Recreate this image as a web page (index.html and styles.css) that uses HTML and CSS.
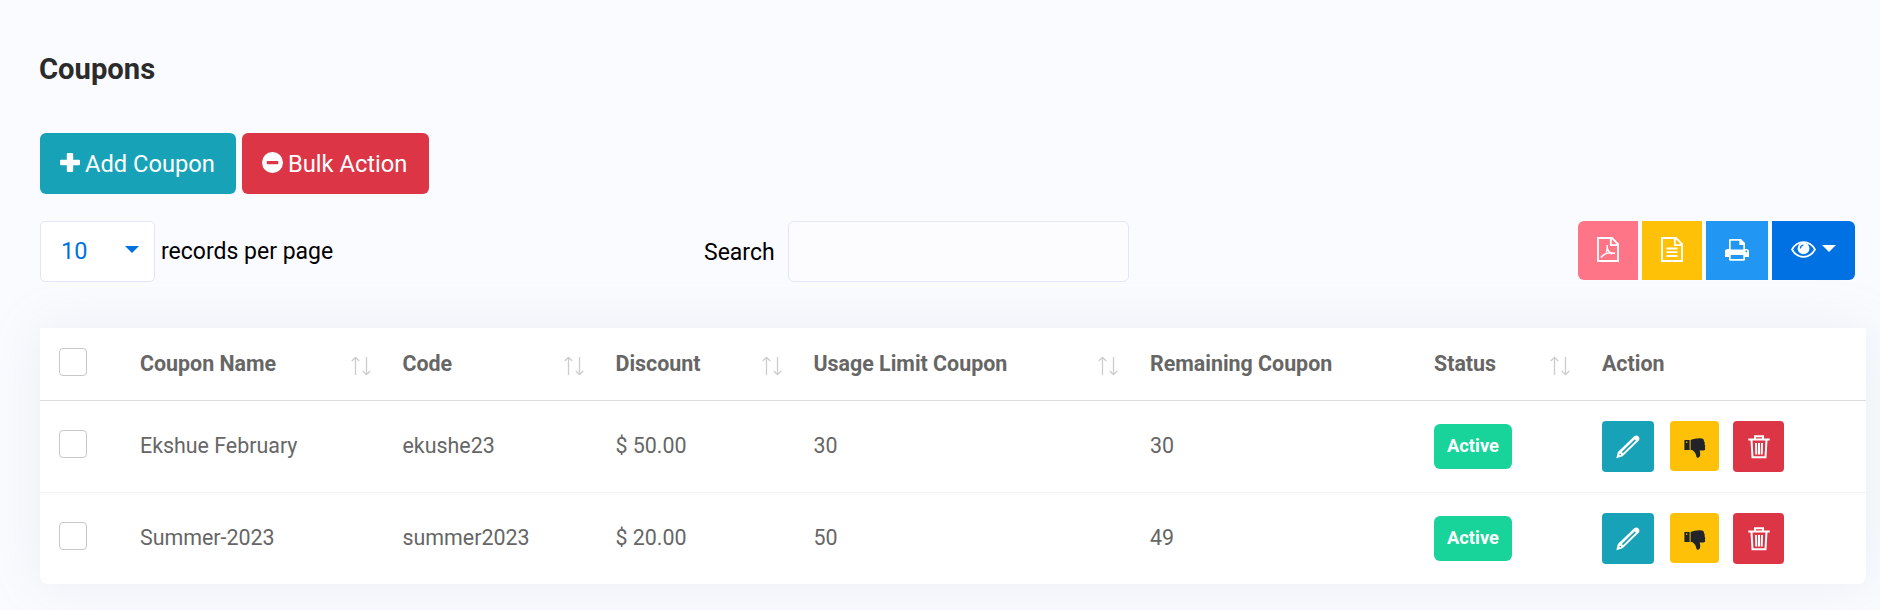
FILE: index.html
```
<!DOCTYPE html>
<html lang="en">
<head>
<meta charset="utf-8">
<title>Coupons</title>
<link rel="stylesheet" href="styles.css">
</head>
<body>
<svg class="defs" width="0" height="0" aria-hidden="true">
  <symbol id="i-sort" viewBox="0 0 20 20"><path d="M4.500 19V1.500M.8 5l3.700-3.600L8.200 5M15.500 1v17.500M11.800 15l3.700 3.600 3.700-3.600" fill="none" stroke="currentColor" stroke-width="1.300"/></symbol>
  <symbol id="i-pencil" viewBox="0 0 24 24"><path d="M.3 23.300l1.600-6.200L18.200 1.300c3-2.400 7 1.500 4.400 4.400L6.600 21.200z" fill="currentColor"/><path d="M5.800 17L18.800 4.300l1.100 1.100L7 18.200z" class="cut-teal"/><circle cx="4.200" cy="19.600" r=".8" class="cut-teal"/></symbol>
  <symbol id="i-thumb" viewBox="0 0 22 20"><path fill="currentColor" fill-rule="evenodd" d="M.4 2H5.600V12H.4zM2 3.400v1.400h1.400V3.400zM6.600 2C10 1 12 .2 16 .3c3.200 0 4 1 4 3 .9.900.9 2 .5 3 .9 1 .9 2.200.4 3.300.9 1.900-.2 3-1.600 3h-3.700c.4 1.500.7 2.500.6 4-.1 2-.8 3.200-2.400 3.200-1.500 0-1.400-2-2-3.600C11 13.900 9 12.600 8 12H6.600z"/></symbol>
  <symbol id="i-trash" viewBox="0 0 22 24"><path d="M.3 4.500h21.400M7 4V1.300h8V4M3.500 5l1 17.300h13l1-17.300M8 8l.3 11.500M11 8v11.500M14 8l-.3 11.500" fill="none" stroke="currentColor" stroke-width="2"/></symbol>
</svg>
<main class="page">
  <h1 class="title">Coupons</h1>
  <div class="buttons">
    <button class="btn teal"><svg width="20" height="20" viewBox="0 0 20 20"><path d="M8 0h4a1.200 1.200 0 0 1 1.200 1.200v5.600h5.600A1.200 1.200 0 0 1 20 8v3a1.200 1.200 0 0 1-1.200 1.200h-5.600v5.600A1.200 1.200 0 0 1 12 19H8a1.200 1.200 0 0 1-1.200-1.200v-5.600H1.200A1.200 1.200 0 0 1 0 11V8a1.200 1.200 0 0 1 1.200-1.200h5.600V1.200A1.200 1.200 0 0 1 8 0z" fill="currentColor"/></svg><span>Add Coupon</span></button>
    <button class="btn red"><svg width="21" height="21" viewBox="0 0 21 21"><path fill="currentColor" fill-rule="evenodd" d="M10.500 0a10.500 10.500 0 1 1 0 21 10.500 10.500 0 0 1 0-21zM5.500 9a.8.8 0 0 0-.8.800v1.600a.8.8 0 0 0 .8.800h10a.8.8 0 0 0 .8-.8V9.800a.8.8 0 0 0-.8-.8z"/></svg><span>Bulk Action</span></button>
  </div>
  <div class="toolbar">
    <div class="length">
      <div class="select"><span>10</span><i class="caret"></i></div>
      <span class="label">records per page</span>
    </div>
    <label class="search"><span class="label">Search</span><input type="text" class="field"></label>
    <div class="export">
      <button class="tool pdf"><svg width="22" height="25" viewBox="0 0 22 25"><path d="M1 1h14l6 6v17H1zM13.800 1v7.200H21" fill="none" stroke="currentColor" stroke-width="1.800"/><path d="M4 20.500c1.500-2.500 3.800-3.600 6.500-4.400 2.600-.7 5-.6 7.500.4M10.200 8c.2 3 .1 5-1 7.500M10 11c1 2.800 2.500 4.800 5 6.400" fill="none" stroke="currentColor" stroke-width="1.500"/></svg></button>
      <button class="tool csv"><svg width="22" height="25" viewBox="0 0 22 25"><path d="M1 1h14l6 6v17H1zM13.800 1v7.200H21M5.500 11.500h11M5.500 15.200h11M5.500 19h11" fill="none" stroke="currentColor" stroke-width="1.800"/></svg></button>
      <button class="tool print"><svg width="24" height="22" viewBox="0 0 24 22"><path fill="currentColor" fill-rule="evenodd" d="M5 0h11l4 4v6h1.500A2.500 2.500 0 0 1 24 12.500V18h-4v2.500a1.300 1.300 0 0 1-1.300 1.300H5.300A1.300 1.300 0 0 1 4 20.500V18H0v-5.500A2.500 2.500 0 0 1 2.500 10H4V1a1 1 0 0 1 1-1zM5.700 1.700V10.500H18.300V6H14.300V1.700zM5.700 16V20H18.300V16zM21.300 11.500a.9.9 0 1 0 .01 0z"/></svg></button>
      <button class="tool view"><svg width="25" height="17" viewBox="0 0 25 17"><path d="M1 8.500C6.500-1.300 18.500-1.300 24 8.500 18.500 18.300 6.500 18.300 1 8.500z" fill="none" stroke="currentColor" stroke-width="1.700"/><circle cx="12.500" cy="7.400" r="5.900" fill="currentColor"/><path d="M9.400 7.600c0-2 1.100-3.300 3-3.500" class="glint"/></svg><i class="caret"></i></button>
    </div>
  </div>
  <table class="table">
    <colgroup><col class="c1"><col class="c2"><col class="c3"><col class="c4"><col class="c5"><col class="c6"><col class="c7"><col class="c8"></colgroup>
    <thead>
      <tr>
        <th><span class="check"></span></th>
        <th><div class="head">Coupon Name<svg class="sort"><use href="#i-sort"/></svg></div></th>
        <th><div class="head">Code<svg class="sort"><use href="#i-sort"/></svg></div></th>
        <th><div class="head">Discount<svg class="sort"><use href="#i-sort"/></svg></div></th>
        <th><div class="head">Usage Limit Coupon<svg class="sort"><use href="#i-sort"/></svg></div></th>
        <th><div class="head plain">Remaining Coupon</div></th>
        <th><div class="head">Status<svg class="sort"><use href="#i-sort"/></svg></div></th>
        <th><div class="head plain">Action</div></th>
      </tr>
    </thead>
    <tbody>
      <tr>
        <td><span class="check"></span></td><td>Ekshue February</td><td>ekushe23</td><td>$ 50.00</td><td>30</td><td>30</td>
        <td><span class="badge">Active</span></td>
        <td><div class="actions"><button class="act edit"><svg width="24" height="24"><use href="#i-pencil"/></svg></button><button class="act down"><svg width="22" height="20"><use href="#i-thumb"/></svg></button><button class="act del"><svg width="22" height="24"><use href="#i-trash"/></svg></button></div></td>
      </tr>
      <tr>
        <td><span class="check"></span></td><td>Summer-2023</td><td>summer2023</td><td>$ 20.00</td><td>50</td><td>49</td>
        <td><span class="badge">Active</span></td>
        <td><div class="actions"><button class="act edit"><svg width="24" height="24"><use href="#i-pencil"/></svg></button><button class="act down"><svg width="22" height="20"><use href="#i-thumb"/></svg></button><button class="act del"><svg width="22" height="24"><use href="#i-trash"/></svg></button></div></td>
      </tr>
    </tbody>
  </table>
</main>
</body>
</html>
```
FILE: styles.css
```
* { box-sizing: border-box; }
body { margin: 0; height: 610px; overflow: hidden; background: #fafbff; font-family: Roboto, "Liberation Sans", sans-serif; color: #000; }
button { border: 0; padding: 0; font: inherit; color: #fff; }
svg { display: block; flex: none; }
.defs { position: absolute; }
.page { padding: 49px 14px 0 40px; }
.title { margin: 0 0 0 -1px; height: 84px; font-size: 29.200px; line-height: 40px; font-weight: 700; color: #2b2b2b; }

.buttons { display: flex; gap: 6px; height: 61px; }
.btn { display: flex; align-items: center; gap: 5px; padding-left: 20px; border-radius: 6px; font-size: 23.700px; white-space: nowrap; }
.btn svg { margin-bottom: 2px; }
.teal { width: 196px; background: #17a2b8; }
.red { width: 187px; background: #dc3545; }

.toolbar { display: flex; height: 61px; margin-top: 27px; }
.label { font-size: 23px; white-space: nowrap; }
.length { display: flex; align-items: center; gap: 6px; width: 664px; padding-bottom: 1px; }
.select { display: flex; align-items: center; justify-content: space-between; width: 115px; height: 61px; padding: 0 15px 1px 20px; margin-bottom: -1px; background: #fff; border: 1px solid #e4e4fb; border-radius: 5px; font-size: 23.500px; color: #0071e3; }
.caret { width: 0; height: 0; border: 7px solid transparent; border-top-color: currentColor; border-bottom: 0; }
.select .caret { margin-bottom: 3px; }
.search { display: flex; align-items: center; gap: 13px; }
.search .label { padding-top: 2px; }
.field { width: 341px; height: 61px; background: #fcfcff; border: 1px solid #e4e4fb; border-radius: 6px; }
.export { display: flex; gap: 4px; height: 59px; margin-left: auto; margin-right: 11px; }
.tool { display: flex; align-items: center; justify-content: center; width: 60px; }
.tool svg { margin-bottom: 2px; }
.pdf { background: #ff7588; border-radius: 6px 0 0 6px; }
.csv { background: #ffc107; }
.print { width: 62px; background: #2196f3; }
.view { width: 83px; gap: 6px; background: #0071e3; border-radius: 0 6px 6px 0; }
.view .caret { margin-bottom: 4px; }
.glint { fill: none; stroke: #0071e3; stroke-width: 1.300; }

.table { width: 1826px; margin-top: 46px; table-layout: fixed; border-collapse: separate; border-spacing: 0; background: #fff; border-radius: 0 0 8px 8px; box-shadow: 0 0 52px rgba(154, 161, 171, .15); font-size: 21.400px; color: #666; }
.c1 { width: 85px; } .c2 { width: 262.500px; } .c3 { width: 213px; } .c4 { width: 198px; }
.c5 { width: 336.500px; } .c6 { width: 284px; } .c7 { width: 168px; } .c8 { width: 279px; }
th, td { padding: 0 0 0 15px; text-align: left; vertical-align: middle; white-space: nowrap; }
th:first-child, td:first-child { padding-left: 19px; }
th { height: 73px; font-weight: 700; border-bottom: 1px solid #ddd; }
td { height: 91px; padding-bottom: 2px; }
tbody tr:first-child td { height: 92px; border-bottom: 1px solid #f3f3f3; }
td:nth-child(n+7) { padding-bottom: 0; }
.head { display: flex; align-items: center; justify-content: space-between; padding: 0 17px 2px 0; }
.plain { min-height: 28px; }
.sort { width: 20px; height: 20px; margin-top: 6px; color: #ccc; }
.check { display: block; width: 28px; height: 28px; margin-bottom: 4px; background: #fff; border: 1px solid #c8c8c8; border-radius: 4px; }
.badge { display: flex; align-items: center; justify-content: center; width: 78px; height: 45px; padding-bottom: 2px; border-radius: 6px; background: #18d39a; color: #fff; font-size: 18.300px; font-weight: 700; }
.actions { display: flex; height: 51px; }
.act { display: flex; align-items: center; justify-content: center; height: 51px; border-radius: 4px; }
.edit { width: 52px; background: #17a2b8; }
.down { width: 49px; height: 50px; margin: 0 14px 0 16px; background: #ffc107; color: #212529; }
.down svg { margin-top: 3px; }
.del { width: 51px; background: #dc3545; }
.cut-teal { fill: #17a2b8; }
```
